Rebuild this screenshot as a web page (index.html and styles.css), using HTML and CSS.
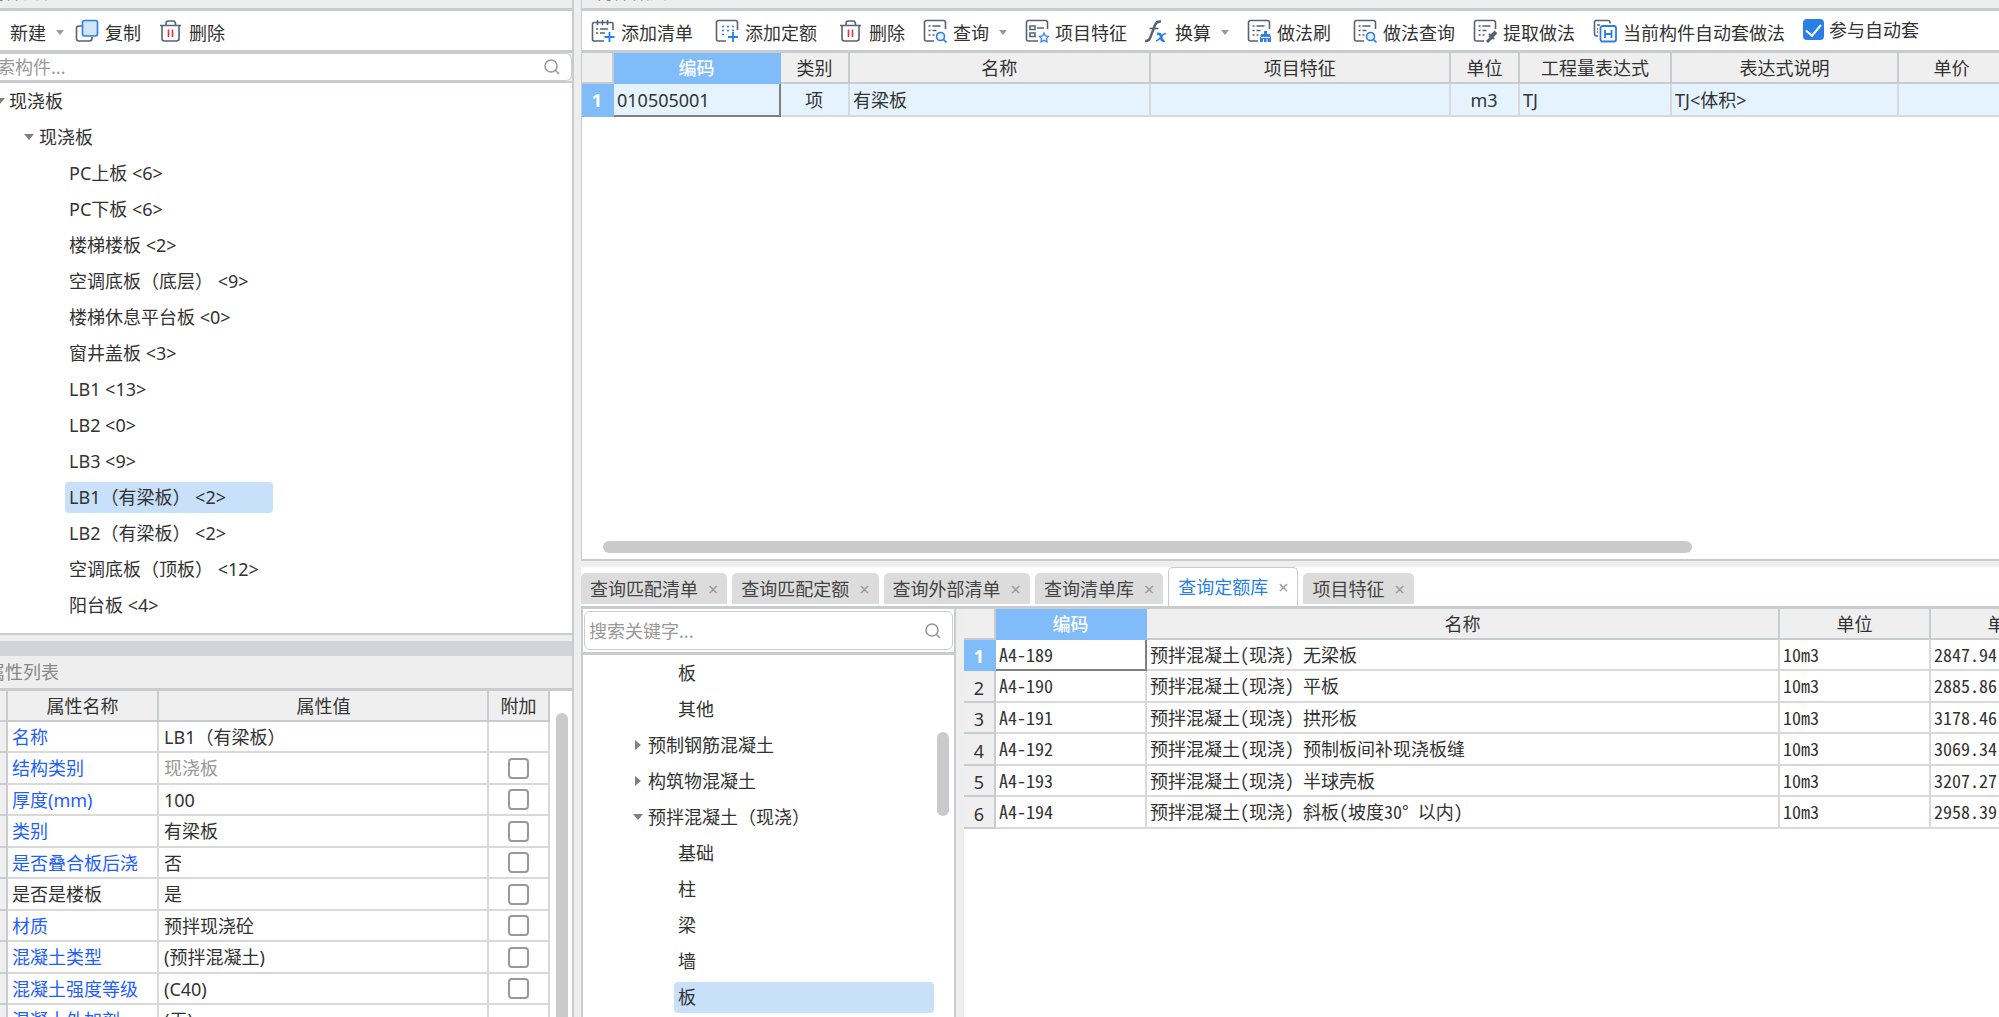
FILE: index.html
```html
<!DOCTYPE html>
<html lang="zh-CN">
<head>
<meta charset="utf-8">
<title>构件做法</title>
<link rel="stylesheet" href="styles.css">
</head>
<body>
<svg class="defs" aria-hidden="true">
  <symbol id="i-trash" viewBox="0 0 24 24"><g fill="none" stroke="#596273" stroke-width="1.6"><path d="M1 6.5h21M7 6V4.5Q7 2 9.500 2h5Q16 2 16.500 4.500V6M3 7v12.500Q3 22 5.500 22h12Q20 22 20 19.500V7"/><path stroke="#e23038" d="M9.500 10.500v7.500M13.500 10.500v7.500"/></g></symbol>
  <symbol id="i-copy" viewBox="0 0 24 24"><path fill="none" stroke="#596273" stroke-width="1.600" d="M7 7H4Q1.500 7 1.500 9.500V19.500Q1.500 22 4 22H14Q17 22 17 19.500V18"/><rect x="7.500" y="1.500" width="15" height="15.500" rx="2" fill="#d2e3fb" stroke="#2b7de9" stroke-width="1.600"/></symbol>
  <symbol id="i-list" viewBox="0 0 24 24"><g fill="none" stroke="#596273" stroke-width="1.600"><path d="M22 11V5Q22 3.500 20.500 3.500H3Q1.500 3.500 1.500 5V20.500Q1.500 22 3.500 22H13M6.500 1v5M11.500 1v5M16.500 1v5M5 10h2M9 10h8M5 14h2M9 14h5"/><path stroke="#2b7de9" stroke-width="1.800" d="M18.500 13v10M13.500 18h10"/></g></symbol>
  <symbol id="i-quota" viewBox="0 0 24 24"><g fill="none" stroke="#596273" stroke-width="1.600"><path d="M22.500 11V3.500Q22.500 1.500 20.500 1.500H3.500Q1.500 1.500 1.500 3.500V20Q1.500 22 3.500 22H11"/><path stroke="#2b7de9" stroke-dasharray="2 3" d="M7 7.500h12M7 11.500h12M7 15.500h5"/><path stroke="#2b7de9" stroke-width="1.800" d="M18 13v10M13 18h10"/></g></symbol>
  <symbol id="i-sheet" viewBox="0 0 24 24"><path fill="none" stroke="#596273" stroke-width="1.600" d="M22.500 10V3.500Q22.500 1.500 20.500 1.500H3.500Q1.500 1.500 1.500 3.500V20Q1.500 22 3.500 22H11M5.500 7h2M9.500 7h8M5.500 11.500h2M9.500 11.500h4M5.500 16h2M9.500 16h2"/></symbol>
  <symbol id="i-query" viewBox="0 0 24 24"><use href="#i-sheet"/><g fill="#e8f2ff" stroke="#2b7de9" stroke-width="1.600"><circle cx="17.500" cy="17.500" r="4"/><path d="M20.500 20.500l3 3"/></g></symbol>
  <symbol id="i-feature" viewBox="0 0 24 24"><path fill="none" stroke="#596273" stroke-width="1.600" d="M22.500 10V3.500Q22.500 1.500 20.500 1.500H3.500Q1.500 1.500 1.500 3.500V20Q1.500 22 3.500 22H13M5 7h5v3.500H5zM5 14h5v3.500H5zM12 9h7"/><path fill="#eaf3ff" stroke="#3f87ee" stroke-width="1.300" d="M19 14l1.500 3 3 .400-2 2.200.500 3.200-3-1.500-3 1.500.500-3.200-2-2.200 3-.400z"/></symbol>
  <symbol id="i-brush" viewBox="0 0 24 24"><use href="#i-sheet"/><path fill="#3380ea" d="M17 12h3v3h3l1 4v4H13v-4l1-4h3z"/><path stroke="#fff" d="M14 18.500h9M16.500 20v3M20 20v3"/></symbol>
  <symbol id="i-pick" viewBox="0 0 24 24"><use href="#i-sheet"/><path fill="none" stroke="#596273" stroke-width="3" d="M14 23l4-4"/><path stroke="#596273" stroke-width="4" d="M17 19l6-6"/><path stroke="#596273" stroke-width="2" d="M16 15l5 5"/></symbol>
  <symbol id="i-auto" viewBox="0 0 24 24"><path fill="none" stroke="#596273" stroke-width="1.600" d="M17 4.500V3.500Q17 1.500 15 1.500H3Q1.500 1.500 1.500 3.500V15Q1.500 17 3.500 17H5M4 6h3M4 10h1M4 13h1"/><rect x="7.500" y="7" width="15.500" height="15.500" rx="2" fill="#fff" stroke="#2b7de9" stroke-width="1.800"/><path fill="none" stroke="#2b7de9" stroke-width="1.800" d="M12 11v8M18.500 11v8M12 15h6.500"/></symbol>
  <symbol id="i-fx" viewBox="0 0 24 24"><path fill="none" stroke="#596273" stroke-width="2.400" d="M0 22q4 .500 5.500-4L10 6q1.500-4 6-3.500"/><path fill="none" stroke="#596273" stroke-width="1.600" d="M4.500 9.500h9"/><path fill="none" stroke="#2b7de9" stroke-width="2.600" d="M12 15q3-1 4 2l.500 3q1 2.500 3 1.500"/><path fill="none" stroke="#2b7de9" stroke-width="1.600" d="M21 15q-2-1-4.500 2.500T11 22"/></symbol>
  <symbol id="i-search" viewBox="0 0 18 18"><g fill="none" stroke="#999" stroke-width="1.600"><circle cx="8" cy="8" r="6"/><path d="M12 12l4 4"/></g></symbol>
</svg>

<main class="app">
  <aside class="side">
    <header class="title side-title">构件列表</header>
    <div class="toolbar side-tools">
      <button class="tool drop">新建</button>
      <button class="tool"><svg><use href="#i-copy"/></svg>复制</button>
      <button class="tool"><svg><use href="#i-trash"/></svg>删除</button>
    </div>
    <label class="search side-search"><input type="text" placeholder="搜索构件..." aria-label="搜索构件"><svg><use href="#i-search"/></svg></label>
    <ul class="tree side-tree">
      <li class="root open">现浇板</li>
      <li class="group open">现浇板</li>
      <li><span>PC上板 &lt;6&gt;</span></li>
      <li><span>PC下板 &lt;6&gt;</span></li>
      <li><span>楼梯楼板 &lt;2&gt;</span></li>
      <li><span>空调底板（底层） &lt;9&gt;</span></li>
      <li><span>楼梯休息平台板 &lt;0&gt;</span></li>
      <li><span>窗井盖板 &lt;3&gt;</span></li>
      <li><span>LB1 &lt;13&gt;</span></li>
      <li><span>LB2 &lt;0&gt;</span></li>
      <li><span>LB3 &lt;9&gt;</span></li>
      <li><span class="selected">LB1（有梁板） &lt;2&gt;</span></li>
      <li><span>LB2（有梁板） &lt;2&gt;</span></li>
      <li><span>空调底板（顶板） &lt;12&gt;</span></li>
      <li><span>阳台板 &lt;4&gt;</span></li>
    </ul>
    <section class="props">
      <div class="grip"></div>
      <header class="title side-title">属性列表</header>
      <div class="props-body">
        <table class="grid props-grid">
          <colgroup><col class="p-gutter"><col class="p-name"><col><col class="p-extra"></colgroup>
          <thead><tr><th></th><th>属性名称</th><th>属性值</th><th>附加</th></tr></thead>
          <tbody>
            <tr><th></th><td class="key">名称</td><td>LB1（有梁板）</td><td></td></tr>
            <tr><th></th><td class="key">结构类别</td><td class="muted">现浇板</td><td class="mid"><input type="checkbox" aria-label="附加 结构类别"></td></tr>
            <tr><th></th><td class="key">厚度(mm)</td><td>100</td><td class="mid"><input type="checkbox" aria-label="附加 厚度"></td></tr>
            <tr><th></th><td class="key">类别</td><td>有梁板</td><td class="mid"><input type="checkbox" aria-label="附加 类别"></td></tr>
            <tr><th></th><td class="key">是否叠合板后浇</td><td>否</td><td class="mid"><input type="checkbox" aria-label="附加 是否叠合板后浇"></td></tr>
            <tr><th></th><td>是否是楼板</td><td>是</td><td class="mid"><input type="checkbox" aria-label="附加 是否是楼板"></td></tr>
            <tr><th></th><td class="key">材质</td><td>预拌现浇砼</td><td class="mid"><input type="checkbox" aria-label="附加 材质"></td></tr>
            <tr><th></th><td class="key">混凝土类型</td><td>(预拌混凝土)</td><td class="mid"><input type="checkbox" aria-label="附加 混凝土类型"></td></tr>
            <tr><th></th><td class="key">混凝土强度等级</td><td>(C40)</td><td class="mid"><input type="checkbox" aria-label="附加 混凝土强度等级"></td></tr>
            <tr><th></th><td class="key">混凝土外加剂</td><td>(无)</td><td></td></tr>
          </tbody>
        </table>
        <div class="vbar"></div>
      </div>
    </section>
  </aside>

  <section class="work">
    <div class="upper">
      <header class="title">构件做法</header>
      <div class="toolbar">
        <button class="tool wide"><svg><use href="#i-list"/></svg>添加清单</button>
        <button class="tool wide"><svg><use href="#i-quota"/></svg>添加定额</button>
        <button class="tool"><svg><use href="#i-trash"/></svg>删除</button>
        <button class="tool drop"><svg><use href="#i-query"/></svg>查询</button>
        <button class="tool"><svg><use href="#i-feature"/></svg>项目特征</button>
        <button class="tool drop"><svg><use href="#i-fx"/></svg>换算</button>
        <button class="tool wide"><svg><use href="#i-brush"/></svg>做法刷</button>
        <button class="tool"><svg><use href="#i-query"/></svg>做法查询</button>
        <button class="tool"><svg><use href="#i-pick"/></svg>提取做法</button>
        <button class="tool"><svg><use href="#i-auto"/></svg>当前构件自动套做法</button>
        <label class="join"><input type="checkbox" checked>参与自动套</label>
      </div>
      <div class="sheet">
        <table class="grid bill-grid">
          <colgroup><col class="c-num"><col class="c-code"><col class="c-kind"><col><col><col class="c-kind"><col class="c-expr"><col class="c-desc"><col class="c-price"></colgroup>
          <thead><tr><th></th><th class="active">编码</th><th>类别</th><th>名称</th><th>项目特征</th><th>单位</th><th>工程量表达式</th><th>表达式说明</th><th>单价</th></tr></thead>
          <tbody><tr><th class="active">1</th><td class="focus">010505001</td><td class="mid">项</td><td>有梁板</td><td></td><td class="mid">m3</td><td>TJ</td><td>TJ&lt;体积&gt;</td><td></td></tr></tbody>
        </table>
      </div>
      <div class="hbar"><div class="hthumb"></div></div>
    </div>

    <nav class="tabs">
      <button class="tab">查询匹配清单<i>×</i></button>
      <button class="tab">查询匹配定额<i>×</i></button>
      <button class="tab">查询外部清单<i>×</i></button>
      <button class="tab">查询清单库<i>×</i></button>
      <button class="tab current">查询定额库<i>×</i></button>
      <button class="tab">项目特征<i>×</i></button>
    </nav>

    <div class="lower">
      <div class="catalog">
        <div class="search-wrap"><label class="search"><input type="text" placeholder="搜索关键字..." aria-label="搜索关键字"><svg><use href="#i-search"/></svg></label></div>
        <div class="catalog-body">
          <ul class="tree">
            <li><span>板</span></li>
            <li><span>其他</span></li>
            <li class="group">预制钢筋混凝土</li>
            <li class="group">构筑物混凝土</li>
            <li class="group open">预拌混凝土（现浇）</li>
            <li><span>基础</span></li>
            <li><span>柱</span></li>
            <li><span>梁</span></li>
            <li><span>墙</span></li>
            <li><span class="selected">板</span></li>
          </ul>
          <div class="vbar"></div>
        </div>
      </div>
      <div class="results">
        <table class="grid quota-grid">
          <colgroup><col class="c-num"><col class="c-id"><col><col class="c-id"><col class="c-id"></colgroup>
          <thead><tr><th></th><th class="active">编码</th><th>名称</th><th>单位</th><th>单价</th></tr></thead>
          <tbody>
            <tr><th class="active">1</th><td class="focus">A4-189</td><td>预拌混凝土(现浇) 无梁板</td><td>10m3</td><td>2847.94</td></tr>
            <tr><th>2</th><td>A4-190</td><td>预拌混凝土(现浇) 平板</td><td>10m3</td><td>2885.86</td></tr>
            <tr><th>3</th><td>A4-191</td><td>预拌混凝土(现浇) 拱形板</td><td>10m3</td><td>3178.46</td></tr>
            <tr><th>4</th><td>A4-192</td><td>预拌混凝土(现浇) 预制板间补现浇板缝</td><td>10m3</td><td>3069.34</td></tr>
            <tr><th>5</th><td>A4-193</td><td>预拌混凝土(现浇) 半球壳板</td><td>10m3</td><td>3207.27</td></tr>
            <tr><th>6</th><td>A4-194</td><td>预拌混凝土(现浇) 斜板(坡度30° 以内)</td><td>10m3</td><td>2958.39</td></tr>
          </tbody>
        </table>
      </div>
    </div>
  </section>
</main>
</body>
</html>
```
FILE: styles.css
```css
:root {
  --line: #c8cbcf;
  --cell: #d9d9d9;
  --panel: #eee;
  --head: #efefef;
  --blue: #80bbfa;
  --pick: #c9e0fa;
  --thumb: #cacaca;
}
* { box-sizing: border-box; }
body {
  margin: 0;
  height: 100vh;
  overflow: hidden;
  background: var(--panel);
  color: #333;
  font: 18px/24px "Noto Sans", "Noto Sans CJK SC", sans-serif;
}
button, input { font: inherit; color: inherit; margin: 0; }
.defs { position: absolute; width: 0; height: 0; }

/* The pane titles scroll partly above the window edge. */
.app { display: flex; gap: 7px; height: calc(100vh + 24px); margin-top: -24px; }
.side { flex: 0 0 574px; display: flex; flex-direction: column; min-width: 0; border-right: 2px solid var(--line); }
.work { flex: 1; display: flex; flex-direction: column; min-width: 0; }

.title { flex: none; height: 32px; padding: 4px 13px; color: #888; }
.side-title { margin-left: -26px; }

.toolbar {
  flex: none;
  display: flex;
  align-items: center;
  gap: 18px;
  height: 45px;
  padding: 4px 0 0 9px;
  border: solid var(--line);
  border-width: 3px 0;
  background: #fff;
  white-space: nowrap;
}
.tool { display: flex; align-items: center; gap: 6px; padding: 0; border: 0; background: none; }
.tool svg { width: 24px; height: 24px; margin-top: -3px; }
.wide { margin-right: 4px; }
.drop::after {
  content: "";
  border: 4px solid transparent;
  border-top: 5px solid #999;
  border-bottom: 0;
  margin-left: 4px;
}
.side-tools { gap: 16px; padding-left: 10px; }
.side-tools .drop { margin-right: -5px; }
.side-tools .tool + .tool + .tool { margin-left: 2px; }
.join { display: flex; align-items: center; gap: 5px; padding-bottom: 6px; }
input[type="checkbox"] {
  appearance: none;
  display: block;
  width: 21px;
  height: 21px;
  border: 2px solid #999;
  border-radius: 4px;
  background: #fff;
}
.join input { display: grid; place-items: center; border: 0; background: #2a7fe4; }
.join input::before {
  content: "";
  width: 7px;
  height: 13px;
  margin-top: -3px;
  border: solid #fff;
  border-width: 0 2px 2px 0;
  transform: rotate(40deg);
}

.search {
  display: flex;
  align-items: center;
  border: 1px solid #ccc;
  border-radius: 6px;
  background: #fff;
}
.search input { flex: 1; min-width: 0; padding: 0; border: 0; outline: 0; background: none; }
.search input::placeholder { color: #999; opacity: 1; }
.search svg { width: 18px; height: 18px; margin-right: 10px; }
.side-search { flex: none; height: 28px; margin-left: -22px; }

.tree { list-style: none; margin: 0; padding: 0; }
.tree li { display: flex; align-items: center; height: 36px; padding-left: 65px; white-space: nowrap; }
.tree span { padding: 3px 4px 4px; border-radius: 4px; }
.tree .selected { background: var(--pick); }
.tree .group { padding-left: 24px; gap: 5px; }
.tree .root { padding-left: 0; margin-left: -5px; gap: 4px; }
.group::before, .root::before {
  content: "";
  margin: 0 2px;
  border: 5px solid transparent;
  border-left: 6px solid #808080;
  border-right: 0;
}
.tree .open::before { margin: 0; border: 5px solid transparent; border-top: 6px solid #808080; border-bottom: 0; }
.side-tree { flex: none; height: 554px; border: solid var(--line); border-width: 2px 0; background: #fff; }
.side-tree .selected { width: 208px; }

.props { flex: 1; min-height: 0; margin-top: 6px; overflow: hidden; }
.grip { height: 15px; background: #d2d4da; }
.props-body { display: flex; border-top: 3px solid var(--line); background: #fff; }
.vbar { flex: none; width: 12px; border-radius: 6px; background: var(--thumb); }
.props .vbar { margin: 22px 4px 0 6px; }

.grid { table-layout: fixed; border-collapse: separate; border-spacing: 0; }
.grid th, .grid td {
  height: 31px;
  padding: 0 4px;
  border: solid var(--cell);
  border-width: 0 2px 2px 0;
  overflow: hidden;
  text-align: left;
  font-weight: 400;
  white-space: nowrap;
}
.grid tr:nth-child(even) > * { height: 32px; }
.grid th { border-color: var(--line); background: var(--head); text-align: center; }
.grid .mid { text-align: center; }
.grid .mid input { margin: auto; }
.grid th.active { border-color: var(--blue); background: var(--blue); color: #fff; font-weight: 500; }
.grid tbody th.active { font-weight: 700; }
.grid td.focus { border-color: #808080; }

.props-grid { flex: 1; width: 100%; }
.p-gutter { width: 8px; }
.p-name { width: 151px; }
.p-extra { width: 61px; }
.props-grid .key { color: #1f5eff; }
.props-grid .muted { color: #999; }
.props-grid tr > :first-child { padding: 0; }
.props-grid tr > :nth-child(3) { padding-left: 5px; }

.upper { flex: none; display: flex; flex-direction: column; height: 585px; overflow: hidden; border-bottom: 2px solid var(--line); border-left: 1px solid var(--line); }
.sheet { flex: 1; overflow: hidden; background: #fff; }
.bill-grid { width: calc(100% + 7px); }
.bill-grid td { padding-left: 3px; background: #e4f3fe; }
.bill-grid tbody tr > * { height: 33px; }
.c-num { width: 32px; }
.c-code { width: 167px; }
.c-kind { width: 69px; }
.c-expr { width: 152px; }
.c-desc { width: 227px; }
.c-price { width: 107px; }
.hbar { flex: none; height: 18px; padding-left: 21px; background: #fff; }
.hthumb { width: 78%; height: 12px; border-radius: 6px; background: var(--thumb); }

.tabs {
  flex: none;
  display: flex;
  align-items: flex-end;
  gap: 5px;
  height: 42px;
  margin-top: 6px;
  border-bottom: 3px solid var(--line);
  background: #fff;
}
.tab {
  display: flex;
  align-items: center;
  gap: 10px;
  height: 31px;
  margin-bottom: 2px;
  padding: 0 9px;
  border: 0;
  border-radius: 5px 5px 0 0;
  background: #dcdcdc;
  color: #444;
  white-space: nowrap;
}
.tab i { color: #999; font-style: normal; }
.tab.current {
  height: 39px;
  margin-bottom: 0;
  border: 1px solid var(--line);
  border-bottom: 0;
  background: #fff;
  color: #2a7fe4;
}

.lower { flex: 1; display: flex; gap: 8px; min-height: 0; }
.catalog { flex: 0 0 375px; display: flex; flex-direction: column; border: solid var(--line); border-width: 0 2px; background: #fff; overflow: hidden; }
.search-wrap { padding: 2px 1px; border-bottom: 3px solid var(--line); }
.search-wrap .search { height: 39px; padding-left: 4px; }
.catalog-body { display: flex; flex: 1; }
.catalog .tree { flex: 1; }
.catalog li { padding-left: 91px; }
.catalog .selected { width: 260px; }
.catalog .group { padding-left: 50px; }
.catalog .vbar { height: 84px; margin: 77px 5px 0 0; }

.results { flex: 1; min-width: 0; overflow: hidden; background: #fff; }
.quota-grid { width: calc(100% + 83px); }
.c-id { width: 151px; }
.quota-grid tbody th { padding-top: 3px; line-height: 20px; }
.quota-grid td { padding: 0 3px 2px; font-family: "Noto Sans Mono CJK SC", "Liberation Mono", "Noto Sans CJK SC", monospace; }
```
